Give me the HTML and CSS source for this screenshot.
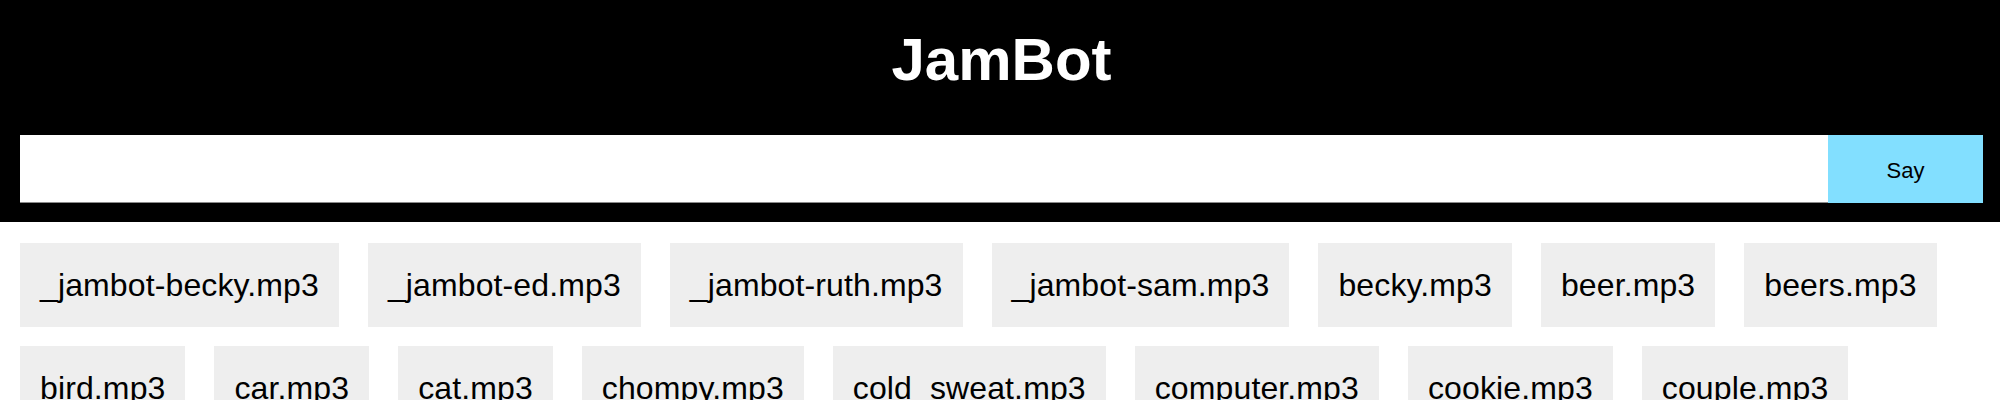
FILE: index.html
```html
<!DOCTYPE html>
<html lang="en">
<head>
<meta charset="utf-8">
<title>JamBot</title>
<link rel="stylesheet" href="styles.css">
</head>
<body>
<header class="top">
  <h1 class="title">JamBot</h1>
  <form class="say-form">
    <input class="say-input" type="text" aria-label="Message">
    <button class="say-btn" type="button">Say</button>
  </form>
</header>
<main class="sounds">
  <button class="sound" type="button">_jambot-becky.mp3</button>
  <button class="sound" type="button">_jambot-ed.mp3</button>
  <button class="sound" type="button">_jambot-ruth.mp3</button>
  <button class="sound" type="button">_jambot-sam.mp3</button>
  <button class="sound" type="button">becky.mp3</button>
  <button class="sound" type="button">beer.mp3</button>
  <button class="sound" type="button">beers.mp3</button>
  <button class="sound" type="button">bird.mp3</button>
  <button class="sound" type="button">car.mp3</button>
  <button class="sound" type="button">cat.mp3</button>
  <button class="sound" type="button">chompy.mp3</button>
  <button class="sound" type="button">cold_sweat.mp3</button>
  <button class="sound" type="button">computer.mp3</button>
  <button class="sound" type="button">cookie.mp3</button>
  <button class="sound" type="button">couple.mp3</button>
</main>
</body>
</html>
```
FILE: styles.css
```css
html, body {
  margin: 0;
  padding: 0;
  background: #fff;
  overflow: hidden;
}

body {
  font-family: "Comic Sans MS", "Liberation Sans", sans-serif;
  color: #000;
}

.top {
  background: #000;
  padding: 18px 17px 19px 20px;
}

.title {
  margin: 0 0 33px;
  font-size: 60px;
  line-height: 84px;
  font-weight: bold;
  color: #fff;
  text-align: center;
}

.say-form {
  display: flex;
  height: 68px;
  margin: 0;
}

.say-input {
  flex: 1;
  min-width: 0;
  border: 0;
  border-bottom: 1px solid #8a8a8a;
  background: #fff;
  padding: 0 12px;
  font-family: inherit;
  font-size: 24px;
  outline: none;
}

.say-btn {
  width: 155px;
  border: 0;
  background: #82dfff;
  color: #000;
  font-family: inherit;
  font-size: 22px;
  padding: 4px 0 0;
  cursor: pointer;
}

.sounds {
  display: flex;
  flex-wrap: wrap;
  align-items: flex-start;
  gap: 19px 29px;
  padding: 21px 20px;
}

.sound {
  background: #eeeeee;
  border: 0;
  margin: 0;
  padding: 20px;
  font-family: inherit;
  font-size: 32px;
  line-height: 44px;
  letter-spacing: 0.12px;
  color: #000;
  cursor: pointer;
}
```
